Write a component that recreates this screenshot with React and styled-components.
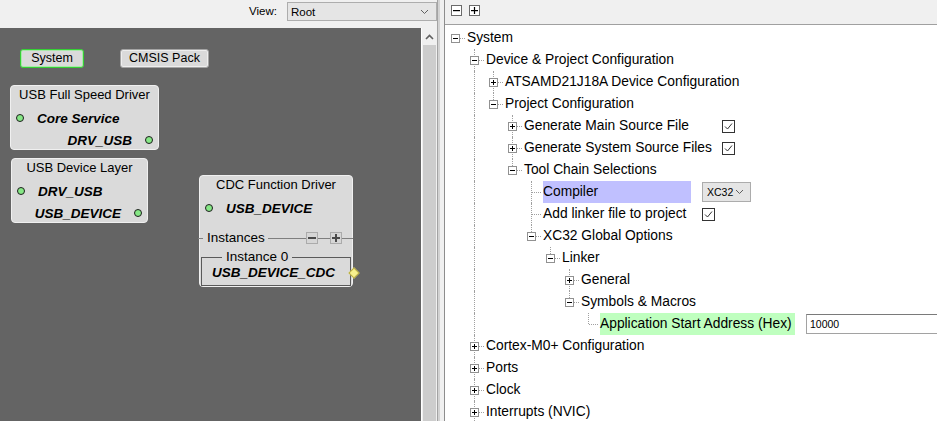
import React from 'react';
import styled, { createGlobalStyle } from 'styled-components';

const GlobalStyle = createGlobalStyle`
  html, body { margin: 0; padding: 0; width: 937px; height: 421px; overflow: hidden; background: #f0f0f0; }
  body { font-family: "Liberation Sans", Arial, sans-serif; color: #000; }
  #root { width: 937px; height: 421px; }
  svg { display: block; }
`;

const Window = styled.div`
  display: flex;
  width: 937px;
  height: 421px;
`;

/* ---------- left side ---------- */
const LeftPanel = styled.div`
  flex: none;
  width: 437px;
  display: flex;
  flex-direction: column;
`;

const ViewBar = styled.div`
  flex: none;
  height: 28px;
  box-sizing: border-box;
  padding-top: 2px;
  display: flex;
  justify-content: flex-end;
  align-items: flex-start;
  gap: 10px;
  background: #f0f0f0;
`;

const ViewLabel = styled.span`
  font-size: 11.5px;
  line-height: 19px;
`;

const ViewSelect = styled.div`
  width: 150px;
  height: 19px;
  box-sizing: border-box;
  border: 1px solid #adadad;
  background: #e5e5e5;
  display: flex;
  align-items: center;
  justify-content: space-between;
  padding: 0 7px 0 3px;
  font-size: 11.5px;
`;

const CanvasArea = styled.div`
  flex: 1;
  display: flex;
  min-height: 0;
`;

const Canvas = styled.div`
  position: relative;
  flex: none;
  width: 421px;
  background: #646464;
  border-right: 1px solid #ffffff;
  overflow: hidden;
`;

const ScrollBar = styled.div`
  flex: none;
  width: 15px;
  display: flex;
  flex-direction: column;
  background: #f0f0f0;
`;

const ScrollArrow = styled.div`
  flex: none;
  height: 17px;
  display: flex;
  align-items: center;
  justify-content: center;
`;

const ScrollThumb = styled.div`
  flex: 1;
  margin: 0 1px;
  background: #cdcdcd;
`;

const Splitter = styled.div`
  flex: none;
  width: 7px;
  background: linear-gradient(to right, #a3a3a3 0 1px, #d2d2d2 1px 3px, #f0f0f0 3px 100%);
`;

/* ---------- diagram ---------- */
const TabButton = styled.div`
  position: absolute;
  left: ${p => p.$x}px;
  top: ${p => p.$y}px;
  width: ${p => p.$w}px;
  height: 19px;
  box-sizing: border-box;
  border: 1px solid ${p => (p.$active ? '#35d035' : '#a4a4a4')};
  box-shadow: inset 0 0 0 1px ${p => (p.$active ? '#a8eaa8' : '#eeeeee')};
  border-radius: 3px;
  background: #dadada;
  font-size: 12.5px;
  line-height: 17px;
  text-align: center;
`;

const Node = styled.div`
  position: absolute;
  left: ${p => p.$x}px;
  top: ${p => p.$y}px;
  width: ${p => p.$w}px;
  height: ${p => p.$h}px;
  box-sizing: border-box;
  background: #dadada;
  border: 1px solid #f0f0f0;
  border-radius: 4px;
  display: flex;
  flex-direction: column;
`;

const NodeTitle = styled.div`
  flex: none;
  height: 18px;
  line-height: 18px;
  font-size: 13px;
  text-align: center;
  white-space: nowrap;
`;

const PortRow = styled.div`
  position: relative;
  flex: none;
  height: 18px;
  margin-top: ${p => p.$mt ?? 4}px;
  display: flex;
  align-items: center;
  justify-content: ${p => (p.$side === 'right' ? 'flex-end' : 'flex-start')};
  padding: 0 5px;
  font-size: 13.5px;
  font-weight: bold;
  font-style: italic;
  white-space: nowrap;
`;

const Dot = styled.span`
  flex: none;
  width: 8px;
  height: 8px;
  box-sizing: border-box;
  border-radius: 50%;
  border: 1px solid #1e1e1e;
  background: #86e886;
  margin: ${p => (p.$side === 'right' ? '0 0 0 13px' : '0 13px 0 0')};
`;

const InstancesRow = styled.div`
  flex: none;
  height: 14px;
  margin: 14px -1px 0 -2px;
  display: flex;
  align-items: center;
  font-size: 13.5px;
`;

const Rule = styled.span`
  height: 1px;
  background: #7f7f7f;
  flex: ${p => (p.$w ? `none` : '1')};
  width: ${p => (p.$w ? `${p.$w}px` : 'auto')};
`;

const InstancesLabel = styled.span`
  margin: 0 3px 0 4px;
  line-height: 14px;
`;

const MiniButton = styled.span`
  flex: none;
  width: 12px;
  height: 12px;
  box-sizing: border-box;
  border: 1px solid #ababab;
  background: #d6d6d6;
  display: flex;
  align-items: center;
  justify-content: center;
`;

const Group = styled.fieldset`
  margin: 5px 1px 0 1px;
  padding: 0 0 3px 10px;
  border: 1px solid #5a5a5a;
  min-width: 0;
`;

const GroupLegend = styled.legend`
  margin-left: 10px;
  padding: 0 4px;
  font-size: 13.5px;
  line-height: 14px;
`;

const GroupRow = styled.div`
  position: relative;
  height: 18px;
  line-height: 18px;
  font-size: 13.5px;
  font-weight: bold;
  font-style: italic;
  white-space: nowrap;
`;

const Diamond = styled.span`
  position: absolute;
  right: -8px;
  top: 50%;
  width: 8px;
  height: 8px;
  box-sizing: border-box;
  border: 1px solid #b9ad43;
  background: #f7f08e;
  transform: translateY(-50%) rotate(45deg);
`;

/* ---------- right side ---------- */
const RightPanel = styled.div`
  flex: 1;
  min-width: 0;
  display: flex;
  flex-direction: column;
  border-left: 1px solid #8d8d8d;
  background: #ffffff;
  overflow: hidden;
`;

const TreeBar = styled.div`
  flex: none;
  height: 25px;
  box-sizing: border-box;
  padding: 5px 0 0 6px;
  display: flex;
  align-items: flex-start;
  gap: 7px;
  background: #f0f0f0;
  border-bottom: 1px solid #a0a0a0;
`;

const TreeBody = styled.div`
  flex: 1;
  padding: 2px 0 0 1px;
  display: flex;
  flex-direction: column;
  font-size: 13.8px;
`;

const Row = styled.div`
  flex: none;
  height: 22px;
  display: flex;
  align-items: center;
  white-space: nowrap;
`;

const Guide = styled.div`
  position: relative;
  flex: none;
  align-self: stretch;
  width: 19px;
  box-sizing: border-box;
  padding: 7px 0 0 5px;
  line-height: 0;
  &::before {
    content: '';
    display: ${p => (p.$top || p.$bottom ? 'block' : 'none')};
    position: absolute;
    left: 9px;
    top: ${p => (p.$top ? 0 : 11)}px;
    bottom: ${p => (p.$bottom ? 0 : 11)}px;
    border-left: 1px dotted #a0a0a0;
  }
  &::after {
    content: '';
    display: ${p => (p.$horiz ? 'block' : 'none')};
    position: absolute;
    left: 10px;
    right: 0;
    top: 11px;
    border-top: 1px dotted #a0a0a0;
  }
`;

const ExpanderBox = styled.span`
  position: relative;
  z-index: 1;
  display: block;
  width: 9px;
  height: 9px;
`;

const Label = styled.span`
  flex: none;
  margin-left: 2px;
  height: 22px;
  line-height: 22px;
  box-sizing: border-box;
  width: ${p => (p.$w ? `${p.$w}px` : 'auto')};
  background: ${p => p.$hl || 'transparent'};
`;

const EditorSlot = styled.span`
  flex: none;
  margin-left: 11px;
  display: flex;
  align-items: center;
`;

const SmallSelect = styled.span`
  width: 49px;
  height: 20px;
  box-sizing: border-box;
  border: 1px solid #acacac;
  background: #e5e5e5;
  display: flex;
  align-items: center;
  justify-content: space-between;
  padding: 0 6px 0 4px;
  font-size: 10.5px;
`;

const TextInput = styled.span`
  width: 150px;
  height: 20px;
  box-sizing: border-box;
  border: 1px solid #a2a2a2;
  border-top-color: #7a7a7a;
  background: #ffffff;
  display: flex;
  align-items: center;
  padding-left: 3px;
  font-size: 10.5px;
`;

/* ---------- drawings ---------- */
const Chevron = ({ up }) => (
  <svg width="9" height="6" viewBox="0 0 9 6">
    <path d={up ? 'M1 5 L4.5 1.5 L8 5' : 'M1 1 L4.5 4.5 L8 1'} fill="none" stroke="#606060" strokeWidth={up ? 1.6 : 1} />
  </svg>
);

const Expander = ({ open }) => (
  <ExpanderBox>
    <svg width="9" height="9" viewBox="0 0 9 9">
      <rect x="0.5" y="0.5" width="8" height="8" fill="#fff" stroke="#919191" />
      <rect x="2" y="4" width="5" height="1" fill="#000" />
      {!open && <rect x="4" y="2" width="1" height="5" fill="#000" />}
    </svg>
  </ExpanderBox>
);

const ToolbarBox = ({ plus }) => (
  <svg width="11" height="11" viewBox="0 0 11 11">
    <rect x="0.5" y="0.5" width="10" height="10" fill="#fff" stroke="#6a6a6a" />
    <rect x="2" y="5" width="7" height="1.2" fill="#000" />
    {plus && <rect x="4.9" y="2" width="1.2" height="7" fill="#000" />}
  </svg>
);

const MiniSign = ({ plus }) => (
  <svg width="8" height="8" viewBox="0 0 8 8">
    <rect x="0" y="3" width="8" height="2" fill="#4a4a4a" />
    {plus && <rect x="3" y="0" width="2" height="8" fill="#4a4a4a" />}
  </svg>
);

const CheckBox = () => (
  <svg width="13" height="13" viewBox="0 0 13 13">
    <rect x="0.5" y="0.5" width="12" height="12" fill="#fff" stroke="#333" />
    <path d="M3 6.5 L5.5 9 L10 3.5" fill="none" stroke="#333" strokeWidth="1" />
  </svg>
);

/* ---------- tree data ---------- */
const LAV = '#c0c0ff';
const MINT = '#bfffbf';

const tree = [
  {
    label: 'System', open: true, children: [
      {
        label: 'Device & Project Configuration', open: true, children: [
          { label: 'ATSAMD21J18A Device Configuration', children: [] },
          {
            label: 'Project Configuration', open: true, children: [
              { label: 'Generate Main Source File', children: [], w: 187, editor: 'check' },
              { label: 'Generate System Source Files', children: [], w: 187, editor: 'check' },
              {
                label: 'Tool Chain Selections', open: true, children: [
                  { label: 'Compiler', w: 148, hl: LAV, editor: 'select' },
                  { label: 'Add linker file to project', w: 148, editor: 'check' },
                  {
                    label: 'XC32 Global Options', open: true, children: [
                      {
                        label: 'Linker', open: true, children: [
                          { label: 'General', children: [] },
                          {
                            label: 'Symbols & Macros', open: true, children: [
                              { label: 'Application Start Address (Hex)', w: 195, hl: MINT, editor: 'input' },
                            ],
                          },
                        ],
                      },
                    ],
                  },
                ],
              },
            ],
          },
        ],
      },
      { label: 'Cortex-M0+ Configuration', children: [] },
      { label: 'Ports', children: [] },
      { label: 'Clock', children: [] },
      { label: 'Interrupts (NVIC)', children: [], last: false },
    ],
  },
];

function flatten(nodes, depth, anc, out) {
  nodes.forEach((n, i) => {
    const last = n.last !== undefined ? n.last : i === nodes.length - 1;
    out.push({ ...n, depth, anc, last });
    if (n.children && n.open) flatten(n.children, depth + 1, [...anc, !last], out);
  });
  return out;
}

const rows = flatten(tree, 0, [], []);

const renderEditor = kind => {
  if (kind === 'check') return <CheckBox />;
  if (kind === 'select')
    return (
      <SmallSelect>
        XC32 <Chevron />
      </SmallSelect>
    );
  if (kind === 'input') return <TextInput>10000</TextInput>;
  return null;
};

function TreeRow({ row }) {
  const root = row.depth === 0;
  return (
    <Row>
      {row.anc.map((hasNext, i) => (
        <Guide key={i} $top={hasNext} $bottom={hasNext} />
      ))}
      <Guide $top={!root} $bottom={!root && !row.last} $horiz>
        {row.children && <Expander open={row.open} />}
      </Guide>
      <Label $w={row.w} $hl={row.hl}>{row.label}</Label>
      {row.editor && <EditorSlot>{renderEditor(row.editor)}</EditorSlot>}
    </Row>
  );
}

function Port({ side, name, mt }) {
  return (
    <PortRow $side={side} $mt={mt}>
      {side === 'left' && <Dot $side="left" />}
      {name}
      {side === 'right' && <Dot $side="right" />}
    </PortRow>
  );
}

export default function App() {
  return (
    <>
      <GlobalStyle />
      <Window>
        <LeftPanel>
          <ViewBar>
            <ViewLabel>View:</ViewLabel>
            <ViewSelect>
              <span>Root</span>
              <Chevron />
            </ViewSelect>
          </ViewBar>
          <CanvasArea>
            <Canvas>
              <TabButton $x={20} $y={21} $w={64} $active>System</TabButton>
              <TabButton $x={120} $y={21} $w={89}>CMSIS Pack</TabButton>

              <Node $x={10} $y={57} $w={149} $h={65}>
                <NodeTitle>USB Full Speed Driver</NodeTitle>
                <Port side="left" name="Core Service" mt={5} />
                <Port side="right" name="DRV_USB" />
              </Node>

              <Node $x={11} $y={130} $w={137} $h={65}>
                <NodeTitle>USB Device Layer</NodeTitle>
                <Port side="left" name="DRV_USB" mt={5} />
                <Port side="right" name="USB_DEVICE" />
              </Node>

              <Node $x={199} $y={147} $w={154} $h={112}>
                <NodeTitle>CDC Function Driver</NodeTitle>
                <Port side="left" name="USB_DEVICE" mt={5} />
                <InstancesRow>
                  <Rule $w={5} />
                  <InstancesLabel>Instances</InstancesLabel>
                  <Rule />
                  <MiniButton><MiniSign /></MiniButton>
                  <Rule $w={12} />
                  <MiniButton><MiniSign plus /></MiniButton>
                  <Rule $w={11} />
                </InstancesRow>
                <Group>
                  <GroupLegend>Instance 0</GroupLegend>
                  <GroupRow>
                    USB_DEVICE_CDC
                    <Diamond />
                  </GroupRow>
                </Group>
              </Node>
            </Canvas>
            <ScrollBar>
              <ScrollArrow>
                <Chevron up />
              </ScrollArrow>
              <ScrollThumb />
            </ScrollBar>
          </CanvasArea>
        </LeftPanel>
        <Splitter />
        <RightPanel>
          <TreeBar>
            <ToolbarBox />
            <ToolbarBox plus />
          </TreeBar>
          <TreeBody>
            {rows.map((r, i) => (
              <TreeRow key={i} row={r} />
            ))}
          </TreeBody>
        </RightPanel>
      </Window>
    </>
  );
}
